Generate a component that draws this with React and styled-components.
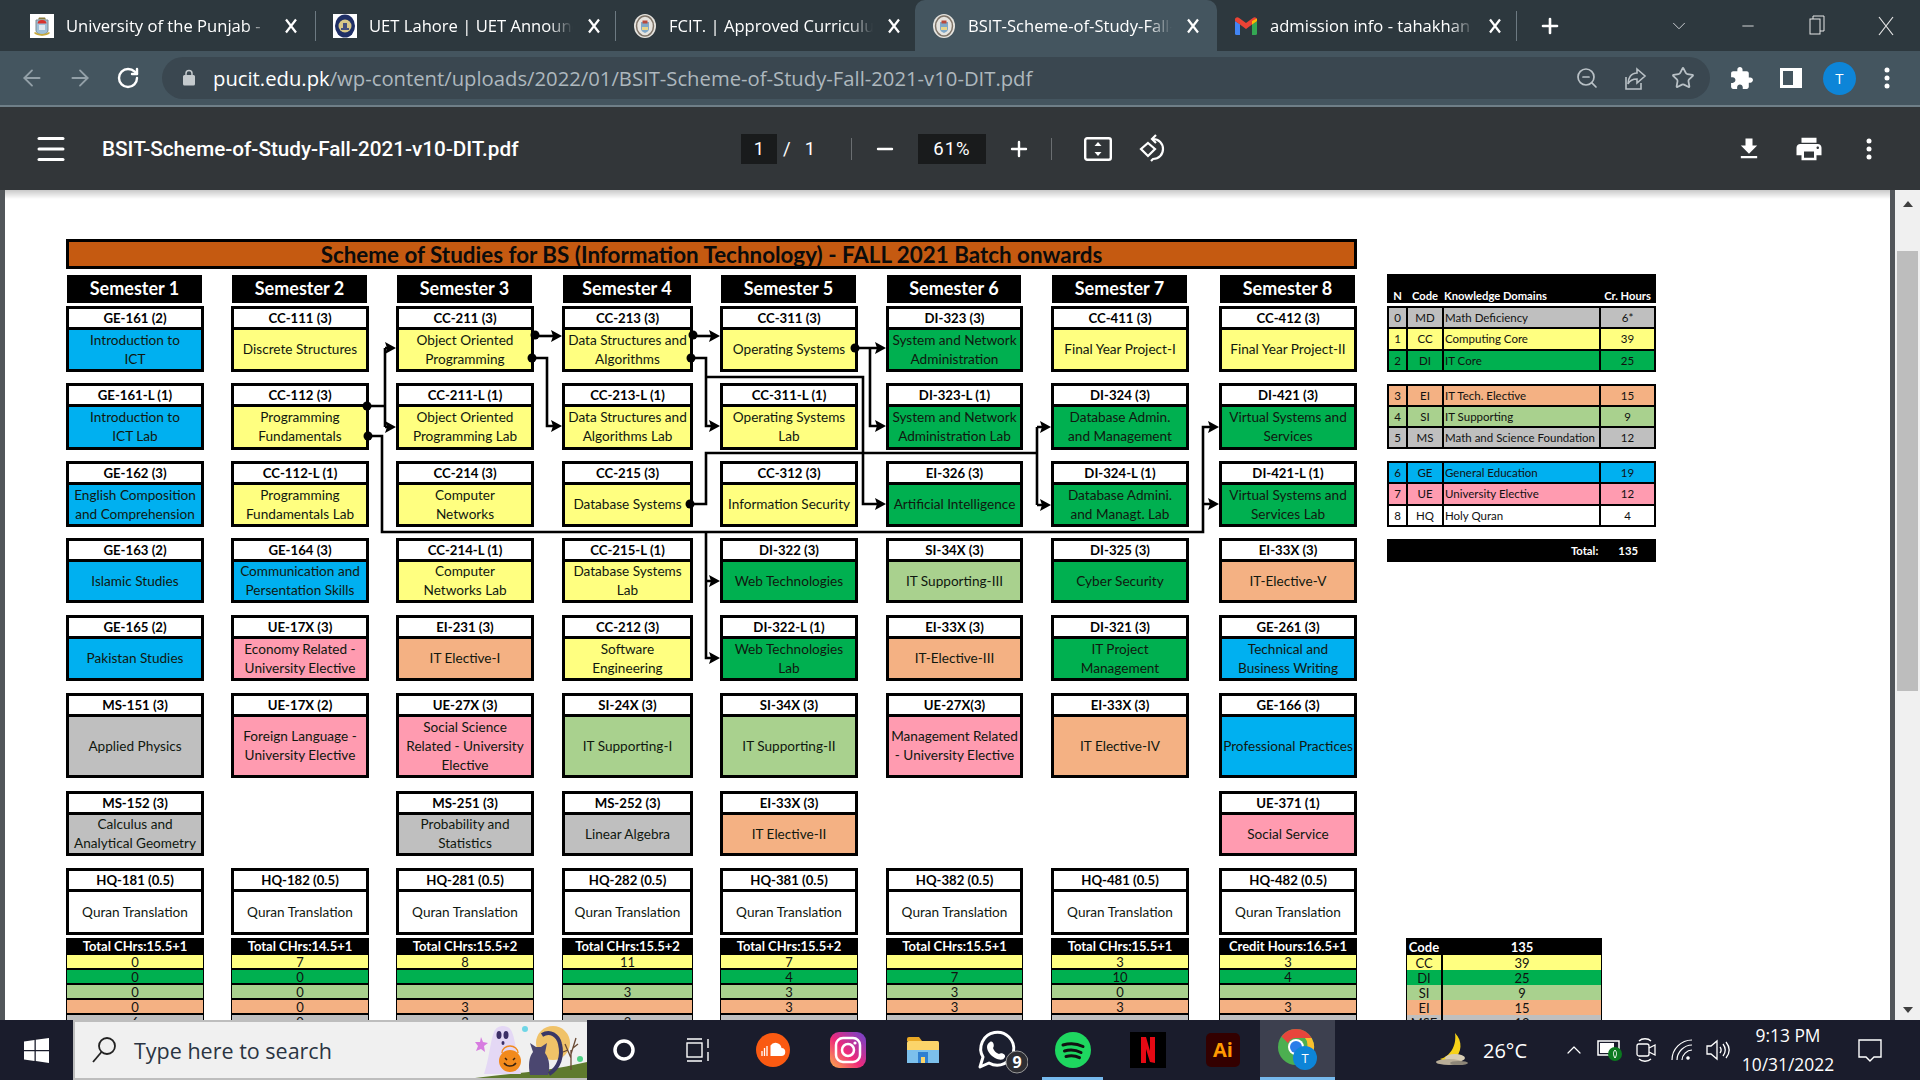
import styled, { createGlobalStyle, css } from "styled-components";
import { ArrowLeft, ArrowRight, RotateCw, ZoomOut, Star, Plus, Minus, ChevronDown, ChevronUp, Menu } from "lucide-react";

const GlobalStyle = createGlobalStyle`
  html, body { margin: 0; padding: 0; height: 100%; overflow: hidden; background: #323639; }
  * { box-sizing: border-box; }
`;

const uiFont = `"Open Sans", "Noto Sans", sans-serif`;
const docFont = `Lato, "Open Sans", sans-serif`;

const tones = {
  white: "#ffffff",
  blue: "#00b0f0",
  yellow: "#ffff80",
  green: "#00b050",
  olive: "#a9d18e",
  orange: "#f4b183",
  pink: "#ff9bb0",
  gray: "#bfbfbf",
};

const semesterColumns = css`
  display: grid;
  grid-template-columns: 138px 27px 138px 27px 138px 28px 131px 27px 138px 28px 137px 28px 138px 30px 138px;
`;

const Screen = styled.div`
  width: 1920px;
  height: 1080px;
  display: flex;
  flex-direction: column;
  overflow: hidden;
  font-family: ${uiFont};
`;

/* browser chrome */
const TabStrip = styled.div`
  height: 51px;
  flex: none;
  display: flex;
  align-items: center;
  padding-left: 13px;
  background: #2d383e;
  color: #fff;
`;
const Tab = styled.div`
  width: ${(p) => p.$width}px;
  height: 51px;
  flex: none;
  display: flex;
  align-items: center;
  padding-left: 17px;
  border-radius: 10px 10px 0 0;
  background: ${(p) => (p.$active ? "#44555f" : "transparent")};
`;
const TabTitle = styled.div`
  width: 204px;
  margin-left: 12px;
  font-size: 16.6px;
  white-space: nowrap;
  overflow: hidden;
  mask-image: linear-gradient(to right, #000 88%, transparent 100%);
`;
const TabClose = styled.svg`
  margin-left: 14px;
  flex: none;
`;
const TabSeparator = styled.div`
  width: 1px;
  height: 30px;
  flex: none;
  background: #6d7a82;
`;
const NewTab = styled.div`
  width: 66px;
  display: flex;
  justify-content: center;
`;
const WindowControls = styled.div`
  margin-left: auto;
  display: flex;
  align-items: center;
`;
const WindowButton = styled.div`
  width: 69px;
  display: flex;
  justify-content: center;
`;

const Toolbar = styled.div`
  height: 56px;
  flex: none;
  display: flex;
  align-items: flex-start;
  padding: 6px 0 0 8px;
  background: #44555f;
  border-bottom: 2px solid #6f7f88;
`;
const NavButton = styled.div`
  width: ${(p) => p.$width || 48}px;
  height: 42px;
  flex: none;
  display: flex;
  align-items: center;
  justify-content: center;
  color: ${(p) => p.$color || "#fff"};
`;
const Omnibox = styled.div`
  width: 1548px;
  height: 42px;
  margin: 0 7px 0 10px;
  flex: none;
  display: flex;
  align-items: center;
  padding-left: 18px;
  border-radius: 21px;
  background: #3a4750;
`;
const Url = styled.div`
  margin-left: 15px;
  font-size: 20.25px;
  color: #aeb8be;
  white-space: nowrap;
  & b {
    font-weight: 400;
    color: #fff;
  }
`;
const OmniActions = styled.div`
  margin-left: auto;
  display: flex;
  padding-right: 3px;
  color: #b9c1c6;
`;
const Avatar = styled.div`
  width: 33px;
  height: 33px;
  border-radius: 50%;
  display: flex;
  align-items: center;
  justify-content: center;
  background: #0d85d8;
  color: #fff;
  font-size: 15px;
`;

/* pdf viewer toolbar */
const PdfBar = styled.div`
  height: 83px;
  flex: none;
  display: flex;
  align-items: center;
  padding: 0 21px 0 33px;
  background: #323639;
  color: #fff;
  font-family: Roboto, sans-serif;
`;
const FileName = styled.div`
  width: 639px;
  margin-left: 33px;
  flex: none;
  font-size: 20.7px;
  font-weight: 500;
`;
const NumberBox = styled.div`
  width: ${(p) => p.$width}px;
  height: 30px;
  flex: none;
  display: flex;
  align-items: center;
  justify-content: center;
  background: #191b1c;
  font-size: 18.5px;
  letter-spacing: ${(p) => (p.$spaced ? "1px" : 0)};
`;
const PageTotal = styled.div`
  width: 74px;
  padding-left: 6px;
  flex: none;
  font-size: 18.5px;
  display: flex;
  gap: 14px;
`;
const BarDivider = styled.div`
  width: 1px;
  height: 22px;
  flex: none;
  background: #6a6e71;
`;
const BarButton = styled.div`
  width: ${(p) => p.$width}px;
  flex: none;
  display: flex;
  align-items: center;
  justify-content: center;
  & svg {
    flex: none;
  }
`;
const BarRight = styled.div`
  margin-left: auto;
  display: flex;
  align-items: center;
`;

/* viewer */
const Viewer = styled.div`
  flex: 1;
  min-height: 0;
  display: flex;
  background: #52565a;
  padding: 0 0 0 5px;
`;
const Page = styled.div`
  position: relative;
  width: 1885px;
  flex: none;
  display: flex;
  align-items: flex-start;
  padding: 49px 0 0 61px;
  background: #fff;
  overflow: hidden;
  &::before {
    content: "";
    position: absolute;
    inset: 0 0 auto 0;
    height: 9px;
    background: linear-gradient(#c9c9c9, #fff);
  }
`;
const Gutter = styled.div`
  width: 5px;
  flex: none;
`;
const Scrollbar = styled.div`
  flex: 1;
  display: flex;
  flex-direction: column;
  align-items: center;
  padding: 11px 2px 0;
  background: #f0f0f0;
`;
const ScrollThumb = styled.div`
  width: 100%;
  height: 440px;
  margin-top: 44px;
  background: #bdbdbd;
`;
const ScrollArrow = styled.div`
  width: 0;
  height: 0;
  border-left: 5px solid transparent;
  border-right: 5px solid transparent;
  ${(p) => (p.$down ? "border-top: 6px solid #404040;" : "border-bottom: 6px solid #404040;")}
  ${(p) => p.$down && "margin-top: 316px;"}
`;

const Sheet = styled.div`
  width: 1291px;
  flex: none;
  font-family: ${docFont};
  color: #111;
`;
const SheetTitle = styled.div`
  height: 30px;
  margin-bottom: 6px;
  display: flex;
  align-items: center;
  justify-content: center;
  border: 3px solid #000;
  background: #c55a11;
  font-size: 22.4px;
  font-weight: 700;
  color: #0b0b0b;
`;
const SemesterRow = styled.div`
  ${semesterColumns}
  margin-bottom: 3px;
`;
const SemesterHead = styled.div`
  grid-column: ${(p) => p.$col * 2 + 1};
  height: 28px;
  margin: 0 2px 0 1px;
  padding-bottom: 3px;
  display: flex;
  align-items: center;
  justify-content: center;
  background: #000;
  color: #fff;
  font-size: 18px;
  font-weight: 700;
`;
const CourseRow = styled.div`
  ${semesterColumns}
  height: ${(p) => p.$h}px;
  margin-bottom: ${(p) => p.$gap}px;
`;
const Card = styled.div`
  grid-column: ${(p) => p.$col * 2 + 1};
  display: flex;
  flex-direction: column;
  border: 3px solid #000;
  background: ${(p) => tones[p.$tone]};
`;
const CardCode = styled.div`
  height: 21px;
  flex: none;
  display: flex;
  align-items: center;
  justify-content: center;
  background: #fff;
  border-bottom: 3px solid #000;
  font-size: 13.2px;
  font-weight: 700;
  color: #000;
`;
const CardName = styled.div`
  flex: 1;
  display: flex;
  align-items: center;
  justify-content: center;
  text-align: center;
  font-size: 13.6px;
  line-height: 19px;
  white-space: pre-line;
  color: #10180f;
`;
const TotalColumn = styled.div`
  grid-column: ${(p) => p.$col * 2 + 1};
  display: flex;
  flex-direction: column;
  gap: 2px;
  padding: 0 1px 0 1px;
  background: #000;
`;
const TotalHead = styled.div`
  height: 15px;
  padding-top: 1px;
  display: flex;
  align-items: center;
  justify-content: center;
  background: #000;
  color: #fff;
  font-size: 13px;
  font-weight: 700;
`;
const TotalCell = styled.div`
  height: 13px;
  flex: none;
  display: flex;
  align-items: center;
  justify-content: center;
  background: ${(p) => tones[p.$tone]};
  font-size: 13px;
  color: #111;
`;

/* legend on the right */
const Side = styled.div`
  width: 269px;
  margin: 35px 0 0 30px;
  flex: none;
  font-family: ${docFont};
  color: #111;
`;
const legendGrid = css`
  display: grid;
  grid-template-columns: 17px 34px 1fr 53px;
  column-gap: 2px;
`;
const LegendHead = styled.div`
  ${legendGrid}
  height: 29px;
  margin-bottom: 3px;
  padding: 15px 2px 0;
  background: #000;
  color: #fff;
  font-size: 11.2px;
  font-weight: 700;
  text-align: center;
  white-space: nowrap;
`;
const LegendHeadLabel = styled.span`
  text-align: left;
`;
const LegendGroup = styled.div`
  display: flex;
  flex-direction: column;
  gap: 2px;
  height: ${(p) => p.$h}px;
  margin-bottom: 12px;
  padding: 2px;
  background: #000;
`;
const LegendRow = styled.div`
  ${legendGrid}
  flex: 1;
  font-size: 11.5px;
  text-align: center;
  align-items: center;
`;
const LegendCell = styled.div`
  height: 100%;
  display: flex;
  align-items: center;
  justify-content: ${(p) => (p.$left ? "flex-start" : "center")};
  padding-left: ${(p) => (p.$left ? "1px" : 0)};
  background: ${(p) => tones[p.$tone]};
  white-space: nowrap;
`;
const LegendTotal = styled.div`
  height: 23px;
  display: flex;
  align-items: center;
  justify-content: flex-end;
  gap: 20px;
  padding-right: 18px;
  background: #000;
  color: #fff;
  font-size: 11.3px;
  font-weight: 700;
`;
const Summary = styled.div`
  width: 196px;
  margin: 376px 0 0 19px;
  display: flex;
  flex-direction: column;
  gap: 2px;
  background: #000;
`;
const SummaryRow = styled.div`
  display: grid;
  grid-template-columns: 34px 1fr;
  column-gap: 2px;
  height: ${(p) => (p.$head ? 15 : 13)}px;
  padding: ${(p) => (p.$head ? "1px 1px 0" : "0 1px")};
  font-size: 13px;
  font-weight: ${(p) => (p.$head ? 700 : 400)};
  color: ${(p) => (p.$head ? "#fff" : "#111")};
`;
const SummaryCell = styled.div`
  display: flex;
  align-items: center;
  justify-content: center;
  background: ${(p) => (p.$tone ? tones[p.$tone] : "#000")};
`;
const Connectors = styled.svg`
  position: absolute;
  left: 0;
  top: 0;
  pointer-events: none;
`;

/* windows taskbar */
const Taskbar = styled.div`
  height: 60px;
  flex: none;
  display: flex;
  align-items: stretch;
  background: #1a1c2c;
  color: #fff;
`;
const StartButton = styled.div`
  width: 73px;
  flex: none;
  display: flex;
  align-items: center;
  padding-left: 24px;
`;
const SearchBox = styled.div`
  width: 514px;
  flex: none;
  display: flex;
  align-items: center;
  padding-left: 16px;
  background: #f0f0f0;
  border: solid #bdbdbd;
  border-width: 2px 0 2px 2px;
  color: #2a3442;
  font-size: 21.5px;
  overflow: hidden;
`;
const SearchText = styled.span`
  margin-left: 17px;
`;
const Doodle = styled.svg`
  margin-left: auto;
  flex: none;
`;
const TaskIcon = styled.div`
  position: relative;
  width: ${(p) => p.$width || 75}px;
  flex: none;
  display: flex;
  align-items: center;
  justify-content: center;
  background: ${(p) => (p.$active ? "#3d404f" : "transparent")};
  &::after {
    content: "";
    position: absolute;
    bottom: 0;
    height: 3px;
    width: ${(p) => (p.$active ? "100%" : "61px")};
    background: #76b9ed;
    display: ${(p) => (p.$running ? "block" : "none")};
  }
`;
const Weather = styled.div`
  width: 221px;
  flex: none;
  display: flex;
  align-items: center;
  padding-left: 100px;
  gap: 12px;
  font-size: 20px;
`;
const TrayIcon = styled.div`
  width: 36px;
  flex: none;
  display: flex;
  align-items: center;
  justify-content: center;
`;
const Clock = styled.div`
  width: 104px;
  flex: none;
  display: flex;
  flex-direction: column;
  justify-content: center;
  align-items: center;
  gap: 8px;
  font-size: 17.4px;
  line-height: 21px;
  white-space: nowrap;
`;
const NotifyButton = styled.div`
  width: 60px;
  flex: none;
  display: flex;
  align-items: center;
  justify-content: center;
`;

const semesters = [1, 2, 3, 4, 5, 6, 7, 8];

const courseRows = [
  { h: 66, gap: 11, cells: [
    ["GE-161 (2)", "Introduction to\nICT", "blue"],
    ["CC-111 (3)", "Discrete Structures", "yellow"],
    ["CC-211 (3)", "Object Oriented\nProgramming", "yellow"],
    ["CC-213 (3)", "Data Structures and\nAlgorithms", "yellow"],
    ["CC-311 (3)", "Operating Systems", "yellow"],
    ["DI-323 (3)", "System and Network\nAdministration", "green"],
    ["CC-411 (3)", "Final Year Project-I", "yellow"],
    ["CC-412 (3)", "Final Year Project-II", "yellow"],
  ] },
  { h: 67, gap: 11, cells: [
    ["GE-161-L (1)", "Introduction to\nICT Lab", "blue"],
    ["CC-112 (3)", "Programming\nFundamentals", "yellow"],
    ["CC-211-L (1)", "Object Oriented\nProgramming Lab", "yellow"],
    ["CC-213-L (1)", "Data Structures and\nAlgorithms Lab", "yellow"],
    ["CC-311-L (1)", "Operating Systems\nLab", "yellow"],
    ["DI-323-L (1)", "System and Network\nAdministration Lab", "green"],
    ["DI-324 (3)", "Database  Admin.\nand Management", "green"],
    ["DI-421 (3)", "Virtual Systems and\nServices", "green"],
  ] },
  { h: 66, gap: 11, cells: [
    ["GE-162 (3)", "English Composition\nand Comprehension", "blue"],
    ["CC-112-L (1)", "Programming\nFundamentals Lab", "yellow"],
    ["CC-214 (3)", "Computer\nNetworks", "yellow"],
    ["CC-215 (3)", "Database Systems", "yellow"],
    ["CC-312 (3)", "Information Security", "yellow"],
    ["EI-326 (3)", "Artificial Intelligence", "green"],
    ["DI-324-L (1)", "Database  Admini.\nand Managt. Lab", "green"],
    ["DI-421-L (1)", "Virtual Systems and\nServices Lab", "green"],
  ] },
  { h: 65, gap: 12, cells: [
    ["GE-163 (2)", "Islamic Studies", "blue"],
    ["GE-164 (3)", "Communication and\nPersentation Skills", "blue"],
    ["CC-214-L (1)", "Computer\nNetworks Lab", "yellow"],
    ["CC-215-L (1)", "Database Systems\nLab", "yellow"],
    ["DI-322 (3)", "Web Technologies", "green"],
    ["SI-34X (3)", "IT Supporting-III", "olive"],
    ["DI-325 (3)", "Cyber Security", "green"],
    ["EI-33X (3)", "IT-Elective-V", "orange"],
  ] },
  { h: 66, gap: 12, cells: [
    ["GE-165 (2)", "Pakistan Studies", "blue"],
    ["UE-17X (3)", "Economy Related -\nUniversity Elective", "pink"],
    ["EI-231 (3)", "IT Elective-I", "orange"],
    ["CC-212 (3)", "Software\nEngineering", "yellow"],
    ["DI-322-L (1)", "Web Technologies\nLab", "green"],
    ["EI-33X (3)", "IT-Elective-III", "orange"],
    ["DI-321 (3)", "IT Project\nManagement", "green"],
    ["GE-261 (3)", "Technical and\nBusiness Writing", "blue"],
  ] },
  { h: 85, gap: 13, cells: [
    ["MS-151 (3)", "Applied Physics", "gray"],
    ["UE-17X (2)", "Foreign Language -\nUniversity Elective", "pink"],
    ["UE-27X (3)", "Social Science\nRelated - University\nElective", "pink"],
    ["SI-24X (3)", "IT Supporting-I", "olive"],
    ["SI-34X (3)", "IT Supporting-II", "olive"],
    ["UE-27X(3)", "Management Related\n- University Elective", "pink"],
    ["EI-33X (3)", "IT Elective-IV", "orange"],
    ["GE-166 (3)", "Professional Practices", "blue"],
  ] },
  { h: 64, gap: 13, cells: [
    ["MS-152 (3)", "Calculus and\nAnalytical Geometry", "gray"],
    null,
    ["MS-251 (3)", "Probability and\nStatistics", "gray"],
    ["MS-252 (3)", "Linear Algebra", "gray"],
    ["EI-33X (3)", "IT Elective-II", "orange"],
    null,
    null,
    ["UE-371 (1)", "Social Service", "pink"],
  ] },
  { h: 67, gap: 3, cells: [
    ["HQ-181 (0.5)", "Quran Translation", "white"],
    ["HQ-182 (0.5)", "Quran Translation", "white"],
    ["HQ-281 (0.5)", "Quran Translation", "white"],
    ["HQ-282 (0.5)", "Quran Translation", "white"],
    ["HQ-381 (0.5)", "Quran Translation", "white"],
    ["HQ-382 (0.5)", "Quran Translation", "white"],
    ["HQ-481 (0.5)", "Quran Translation", "white"],
    ["HQ-482 (0.5)", "Quran Translation", "white"],
  ] },
];

const totalTones = ["yellow", "green", "olive", "orange", "gray"];
const totals = [
  ["Total CHrs:15.5+1", ["0", "0", "0", "0", "6"]],
  ["Total CHrs:14.5+1", ["7", "0", "0", "0", "0"]],
  ["Total CHrs:15.5+2", ["8", "", "", "3", "3"]],
  ["Total CHrs:15.5+2", ["11", "", "3", "", "3"]],
  ["Total CHrs:15.5+2", ["7", "4", "3", "3", ""]],
  ["Total CHrs:15.5+1", ["", "7", "3", "3", ""]],
  ["Total CHrs:15.5+1", ["3", "10", "0", "3", ""]],
  ["Credit Hours:16.5+1", ["3", "4", "", "3", ""]],
];

const legendGroups = [
  { h: 66, rows: [["0", "MD", "Math Deficiency", "6*", "gray"], ["1", "CC", "Computing Core", "39", "yellow"], ["2", "DI", "IT Core", "25", "green"]] },
  { h: 65, rows: [["3", "EI", "IT Tech. Elective", "15", "orange"], ["4", "SI", "IT Supporting", "9", "olive"], ["5", "MS", "Math and Science Foundation", "12", "gray"]] },
  { h: 66, rows: [["6", "GE", "General Education", "19", "blue"], ["7", "UE", "University Elective", "12", "pink"], ["8", "HQ", "Holy Quran", "4", "white"]] },
];

const summaryRows = [
  ["CC", "39", "yellow"],
  ["DI", "25", "green"],
  ["SI", "9", "olive"],
  ["EI", "15", "orange"],
  ["MSF", "12", "gray"],
];

// connector lines of the prerequisite diagram, in screen coordinates
const links = [
  "M367 406H385M385 348V427M385 348H390M385 427H390",
  "M368 436H382V532H1203V427H1212M1203 504H1212",
  "M535 336H555",
  "M532 358H547V426H555",
  "M693 336H713",
  "M691 358H706V426H713",
  "M706 377H863V504H879",
  "M690 504H706V453H1037M1037 427V505M1037 427H1044M1037 505H1044",
  "M855 348H879M870 348V426H879",
  "M706 532V658H713M706 581H713",
];
const arrowTips = [
  [396, 348], [396, 427], [1219, 427], [1219, 504], [562, 336], [562, 426], [720, 336], [720, 426],
  [886, 504], [1051, 427], [1051, 505], [886, 348], [886, 426], [720, 581], [720, 658],
];
const dots = [
  [367, 406], [368, 436], [535, 335], [532, 358], [693, 335], [691, 358], [690, 504], [855, 348],
];

function CloseGlyph() {
  return (
    <TabClose width="14" height="16" viewBox="0 0 14 16">
      <path d="M2 1.5L12 14.5M12 1.5L2 14.5" stroke="#fff" strokeWidth="2.2" />
    </TabClose>
  );
}

function PunjabCrest() {
  return (
    <svg width="24" height="24" viewBox="0 0 24 24">
      <rect width="24" height="24" fill="#fff" />
      <path d="M9 3.500h6l1 2H8z" fill="#8a7a3a" />
      <path d="M6 6h12v10c0 3-3 4.500-6 5-3-.5-6-2-6-5z" fill="#9fc0d8" stroke="#7a8a90" />
      <path d="M7.500 9.500a4.500 3.500 0 0 1 9 0z" fill="#d8322c" />
      <rect x="9" y="11" width="6" height="5" fill="#dfe8ee" />
      <path d="M4 19c3 3.500 13 3.500 16 0l-1-1c-3 2.500-11 2.500-14 0z" fill="#c8a93a" />
    </svg>
  );
}

function UetCrest() {
  return (
    <svg width="24" height="24" viewBox="0 0 24 24">
      <rect width="24" height="24" fill="#fff" />
      <ellipse cx="12" cy="12" rx="10" ry="11.500" fill="#1f2f66" />
      <circle cx="12" cy="12" r="6.500" fill="#d8c888" />
      <path d="M8 14h8v2H8zM10 9h4v5h-4z" fill="#44507e" />
    </svg>
  );
}

function FcitCrest() {
  return (
    <svg width="24" height="24" viewBox="0 0 24 24">
      <ellipse cx="12" cy="12" rx="11" ry="12" fill="#e6e4df" />
      <ellipse cx="12" cy="12" rx="8.500" ry="10" fill="none" stroke="#7f7468" strokeWidth="1.500" />
      <path d="M8 8h8v7c0 2-2 3-4 4-2-1-4-2-4-4z" fill="#7fa8c8" />
      <path d="M9.500 6.500h5v3h-5z" fill="#b84a3c" />
      <path d="M9 13h6v3H9z" fill="#e7d58a" />
    </svg>
  );
}

function GmailMark() {
  return (
    <svg width="24" height="18" viewBox="-1 0 24 18">
      <path d="M0 4v12.500A1.500 1.500 0 0 0 1.500 18H5V7z" fill="#4285f4" />
      <path d="M17 7v11h3.500a1.500 1.500 0 0 0 1.500-1.500V4z" fill="#34a853" />
      <path d="M0 4l5 3.500L11 12l6-4.500L22 4V2.500C22 .500 19.800-.5 18.200.700L11 6 3.800.700C2.200-.5 0 .500 0 2.500z" fill="#ea4335" />
      <path d="M17 7.500L22 4V1.500L17 4z" fill="#fbbc04" />
    </svg>
  );
}

function MaterialIcon({ d, size = 24, color = "currentColor" }) {
  return (
    <svg width={size} height={size} viewBox="0 0 24 24" fill={color}>
      <path d={d} />
    </svg>
  );
}

const icons = {
  lock: "M18 8h-1V6a5 5 0 0 0-10 0v2H6a2 2 0 0 0-2 2v10a2 2 0 0 0 2 2h12a2 2 0 0 0 2-2V10a2 2 0 0 0-2-2zM9 8V6a3 3 0 0 1 6 0v2H9z",
  puzzle: "M20.500 11H19V7c0-1.100-.9-2-2-2h-4V3.500C13 2.120 11.880 1 10.500 1S8 2.120 8 3.500V5H4c-1.100 0-1.990.9-1.990 2v3.800H3.500c1.490 0 2.700 1.210 2.700 2.700s-1.210 2.700-2.700 2.700H2V20c0 1.100.9 2 2 2h3.800v-1.500c0-1.490 1.210-2.700 2.700-2.700 1.490 0 2.700 1.210 2.700 2.700V22H17c1.100 0 2-.9 2-2v-4h1.500c1.380 0 2.500-1.120 2.500-2.500S21.880 11 20.500 11z",
  print: "M19 8H5c-1.660 0-3 1.340-3 3v6h4v4h12v-4h4v-6c0-1.660-1.340-3-3-3zm-3 11H8v-5h8v5zm3-7c-.55 0-1-.45-1-1s.45-1 1-1 1 .45 1 1-.45 1-1 1zm-1-9H6v4h12V3z",
  download: "M19 9h-4V3H9v6H5l7 7 7-7zM5 18v2h14v-2H5z",
};

function DotsIcon({ color = "#fff" }) {
  return (
    <svg width="6" height="22" viewBox="0 0 6 22" fill={color}>
      <circle cx="3" cy="3" r="2.500" />
      <circle cx="3" cy="11" r="2.500" />
      <circle cx="3" cy="19" r="2.500" />
    </svg>
  );
}

function WindowsLogo() {
  return (
    <svg width="25" height="25" viewBox="0 0 25 25" fill="#fff">
      <path d="M0 3.500L10.500 2v10H0zM11.800 1.800L25 0v12H11.800zM0 13.200h10.500V23L0 21.600zM11.800 13.200H25V25l-13.200-1.900z" />
    </svg>
  );
}

function HalloweenDoodle() {
  return (
    <Doodle width="112" height="56" viewBox="0 0 112 56">
      <path d="M0 56C30 52 70 50 112 40V56z" fill="#5f7a2e" />
      <path d="M6 15l2 5 5 1-4 3 1 6-4-3-5 2 2-5-3-4 5 0z" fill="#d77ce0" />
      <circle cx="50" cy="7" r="3" fill="#6fd6e6" />
      <circle cx="105" cy="37" r="3" fill="#4cd184" />
      <circle cx="78" cy="21" r="17" fill="#f0c268" />
      <path d="M9 52C14 38 15 20 19 10c3-8 15-8 18 0 4 10 5 28 9 42z" fill="#e4d8f5" />
      <ellipse cx="24" cy="13" rx="2.500" ry="4" fill="#3c2f66" />
      <ellipse cx="31" cy="13" rx="2.500" ry="4" fill="#3c2f66" />
      <ellipse cx="28" cy="21" rx="1.500" ry="2" fill="#3c2f66" />
      <circle cx="35" cy="39" r="11" fill="#f28a1c" />
      <path d="M27 31a8 7 0 0 1 16 0" fill="none" stroke="#f28a1c" strokeWidth="1.500" />
      <path d="M30 36l2 2M40 36l-2 2M29 41c3 4 9 4 12 0" stroke="#3a2310" strokeWidth="1.500" fill="none" />
      <path d="M55 53c-2-10-1-18 3-23l-3-9 6 4h5l6-4-2 10c5 6 5 16 3 22z" fill="#4b4770" />
      <path d="M74 52c10-6 14-18 11-30-2-9-10-14-18-9" fill="none" stroke="#3a3766" strokeWidth="4" />
      <path d="M96 48V28M96 36l-6-14M96 32l5-16M93 28l-5 2M98 26l5-4" stroke="#6a4a35" strokeWidth="1.300" fill="none" />
    </Doodle>
  );
}

function SoundCloudMark() {
  return (
    <svg width="34" height="34" viewBox="0 0 34 34">
      <circle cx="17" cy="17" r="17" fill="#fa5a12" />
      <path d="M12 23h13a4 4 0 0 0 .5-8 6 6 0 0 0-11-2.500V23z" fill="#fff" />
      <path d="M6 18v5M8.500 15v8M11 13v10" stroke="#fff" strokeWidth="1.300" />
    </svg>
  );
}

function InstagramMark() {
  return (
    <svg width="36" height="36" viewBox="0 0 36 36">
      <defs>
        <linearGradient id="ig" x1="0" y1="1" x2="1" y2="0">
          <stop offset="0" stopColor="#fdb04a" />
          <stop offset="0.45" stopColor="#ee2a7b" />
          <stop offset="1" stopColor="#6a45d0" />
        </linearGradient>
      </defs>
      <rect width="36" height="36" rx="9" fill="url(#ig)" />
      <rect x="6" y="6" width="24" height="24" rx="7" fill="none" stroke="#fff" strokeWidth="2.500" />
      <circle cx="18" cy="18" r="6" fill="none" stroke="#fff" strokeWidth="2.500" />
      <circle cx="25" cy="11" r="1.600" fill="#fff" />
    </svg>
  );
}

function ExplorerMark() {
  return (
    <svg width="32" height="26" viewBox="0 0 32 26">
      <path d="M0 2a2 2 0 0 1 2-2h10l3 4H0z" fill="#e9a825" />
      <rect y="4" width="32" height="22" rx="1.500" fill="#fbd46a" />
      <path d="M0 13h32v13H0z" fill="#7cc0ec" />
      <rect x="11" y="15" width="10" height="11" fill="#2f7fd0" />
      <rect x="14" y="20" width="4" height="6" fill="#fbd46a" />
    </svg>
  );
}

function WhatsAppMark() {
  return (
    <svg width="60" height="52" viewBox="0 0 60 52">
      <path d="M12 43l3-10a16.500 16.500 0 1 1 6 6z" fill="#1b1f2f" stroke="#fff" strokeWidth="3" strokeLinejoin="round" />
      <g transform="translate(9 6)">
        <path d="M13 12c3-2 5 4 3 6 1 3 3 5 6 6 2-2 7 0 6 3-2 4-6 3-10 1-4-2-8-7-8-11 0-2 1-4 3-5z" fill="#fff" />
      </g>
      <circle cx="49" cy="38" r="11" fill="#2e2e33" stroke="#9a9a9a" strokeWidth="1" />
      <text x="49" y="44" fill="#fff" fontSize="16" fontFamily="Open Sans" fontWeight="700" textAnchor="middle">9</text>
    </svg>
  );
}

function SpotifyMark() {
  return (
    <svg width="36" height="36" viewBox="0 0 36 36">
      <circle cx="18" cy="18" r="18" fill="#1ed760" />
      <path d="M8 13c7-2 14-1.500 20 1.500M9.500 19c6-1.600 11.500-1 16.500 1.500M11 24.500c5-1.200 9.500-.8 13.500 1.200" fill="none" stroke="#111" strokeWidth="3" strokeLinecap="round" />
    </svg>
  );
}

function NetflixMark() {
  return (
    <svg width="36" height="36" viewBox="0 0 36 36">
      <rect width="36" height="36" fill="#000" />
      <path d="M11 5h5l4 14V5h5v26l-5-1-4-13v14h-5z" fill="#e50914" />
    </svg>
  );
}

function IllustratorMark() {
  return (
    <svg width="34" height="34" viewBox="0 0 34 34">
      <rect width="34" height="34" rx="5" fill="#330000" />
      <text x="17" y="24" fill="#ff9a00" fontSize="20" fontWeight="700" fontFamily="Open Sans" textAnchor="middle">Ai</text>
    </svg>
  );
}

function ChromeMark() {
  return (
    <svg width="40" height="42" viewBox="0 0 40 42">
      <circle cx="18" cy="18" r="18" fill="#4caf50" />
      <path d="M18 0a18 18 0 0 1 15.600 9H18a9 9 0 0 0-8 5L3.500 7.500A18 18 0 0 1 18 0z" fill="#e8453c" />
      <path d="M33.600 9A18 18 0 0 1 18 36l7.800-13.500A9 9 0 0 0 27 9z" fill="#fbc02d" />
      <circle cx="18" cy="18" r="8" fill="#fff" />
      <circle cx="18" cy="18" r="6" fill="#2b7de9" />
      <circle cx="27" cy="29" r="12" fill="#0d85d8" />
      <text x="27" y="34" fill="#fff" fontSize="13" fontFamily="Open Sans" textAnchor="middle">T</text>
    </svg>
  );
}

function MoonCloud() {
  return (
    <svg width="36" height="36" viewBox="0 0 36 36">
      <path d="M20 1c8 8 7 20-1 26-4 2-10 2-14 0 9-2 17-12 15-26z" fill="#f7d218" />
      <ellipse cx="20" cy="26" rx="10" ry="4" fill="#d8cdb4" />
      <ellipse cx="14" cy="30" rx="13" ry="3" fill="#b8ad98" />
      <ellipse cx="24" cy="31" rx="9" ry="2" fill="#8d8678" />
    </svg>
  );
}

export default function App() {
  return (
    <Screen>
      <GlobalStyle />
      <TabStrip>
        <Tab $width={302}>
          <PunjabCrest />
          <TabTitle>University of the Punjab -</TabTitle>
          <CloseGlyph />
        </Tab>
        <TabSeparator />
        <Tab $width={299}>
          <UetCrest />
          <TabTitle>UET Lahore | UET Announcements</TabTitle>
          <CloseGlyph />
        </Tab>
        <TabSeparator />
        <Tab $width={299}>
          <FcitCrest />
          <TabTitle>FCIT. | Approved Curriculum</TabTitle>
          <CloseGlyph />
        </Tab>
        <Tab $width={302} $active>
          <FcitCrest />
          <TabTitle>BSIT-Scheme-of-Study-Fall-2021-v10-DIT.pdf</TabTitle>
          <CloseGlyph />
        </Tab>
        <Tab $width={299}>
          <GmailMark />
          <TabTitle>admission info - tahakhan</TabTitle>
          <CloseGlyph />
        </Tab>
        <TabSeparator />
        <NewTab>
          <Plus size={24} color="#fff" strokeWidth={2.6} />
        </NewTab>
        <WindowControls>
          <WindowButton>
            <ChevronDown size={22} color="#d6dadd" strokeWidth={1} />
          </WindowButton>
          <WindowButton>
            <Minus size={18} color="#e6e6e6" strokeWidth={1.2} />
          </WindowButton>
          <WindowButton>
            <svg width="16" height="22" viewBox="0 0 16 22" fill="none" stroke="#e6e6e6">
              <rect x="1" y="4" width="10" height="15" />
              <path d="M4 4V1h11v15h-4" />
            </svg>
          </WindowButton>
          <WindowButton>
            <svg width="16" height="22" viewBox="0 0 16 22" stroke="#e6e6e6" strokeWidth="1.200">
              <path d="M1 2l14 18M15 2L1 20" />
            </svg>
          </WindowButton>
        </WindowControls>
      </TabStrip>

      <Toolbar>
        <NavButton $color="#93a0a8">
          <ArrowLeft size={26} strokeWidth={1.7} />
        </NavButton>
        <NavButton $color="#93a0a8">
          <ArrowRight size={26} strokeWidth={1.7} />
        </NavButton>
        <NavButton>
          <RotateCw size={24} strokeWidth={2.4} />
        </NavButton>
        <Omnibox>
          <MaterialIcon d={icons.lock} size={18} color="#c4cacd" />
          <Url>
            <b>pucit.edu.pk</b>/wp-content/uploads/2022/01/BSIT-Scheme-of-Study-Fall-2021-v10-DIT.pdf
          </Url>
          <OmniActions>
            <NavButton>
              <ZoomOut size={24} color="#b9c1c6" strokeWidth={1.7} />
            </NavButton>
            <NavButton>
              <svg width="24" height="26" viewBox="0 0 24 26" fill="none" stroke="#b9c1c6" strokeWidth="1.600">
                <path d="M3 12v12h15v-6" />
                <path d="M14 4l8 7-8 7v-4c-4 0-7 1-9 5 0-6 3-11 9-11z" />
              </svg>
            </NavButton>
            <NavButton>
              <Star size={24} color="#b9c1c6" strokeWidth={1.8} />
            </NavButton>
          </OmniActions>
        </Omnibox>
        <NavButton $width={49}>
          <MaterialIcon d={icons.puzzle} size={25} />
        </NavButton>
        <NavButton $width={49}>
          <svg width="22" height="20" viewBox="0 0 22 20">
            <path d="M0 0h22v20H0zM3 3v14h10V3z" fill="#fff" fillRule="evenodd" />
            <rect x="13" y="3" width="6" height="14" fill="#fff" />
          </svg>
        </NavButton>
        <NavButton $width={49}>
          <Avatar>T</Avatar>
        </NavButton>
        <NavButton $width={46}>
          <DotsIcon />
        </NavButton>
      </Toolbar>

      <PdfBar>
        <Menu size={36} color="#fff" strokeWidth={2} />
        <FileName>BSIT-Scheme-of-Study-Fall-2021-v10-DIT.pdf</FileName>
        <NumberBox $width={36}>1</NumberBox>
        <PageTotal>
          <span>/</span>
          <span>1</span>
        </PageTotal>
        <BarDivider />
        <BarButton $width={66}>
          <Minus size={24} color="#fff" strokeWidth={2.4} />
        </BarButton>
        <NumberBox $width={68} $spaced>61%</NumberBox>
        <BarButton $width={65}>
          <Plus size={24} color="#fff" strokeWidth={2.4} />
        </BarButton>
        <BarDivider />
        <BarButton $width={91}>
          <svg width="28" height="24" viewBox="0 0 28 24">
            <rect x="1.200" y="1.200" width="25.600" height="21.600" rx="2" fill="none" stroke="#fff" strokeWidth="2.400" />
            <path d="M14 5l3.500 4h-7zM14 19l-3.500-4h7z" fill="#fff" />
          </svg>
        </BarButton>
        <BarButton $width={17}>
          <svg width="28" height="30" viewBox="0 0 28 30" fill="none" stroke="#fff" strokeWidth="2.200">
            <path d="M10 9l7 6-7 7-7-7z" />
            <path d="M15 5c6 0 10 4.500 10 10s-4 10-10 10l-2 2" />
            <path d="M18 1l-4 4 4 4" />
          </svg>
        </BarButton>
        <BarRight>
          <BarButton $width={60}>
            <MaterialIcon d={icons.download} size={28} />
          </BarButton>
          <BarButton $width={60}>
            <MaterialIcon d={icons.print} size={30} />
          </BarButton>
          <BarButton $width={60}>
            <DotsIcon />
          </BarButton>
        </BarRight>
      </PdfBar>

      <Viewer>
        <Page>
          <Sheet>
            <SheetTitle>Scheme of Studies for BS (Information Technology) - FALL 2021 Batch onwards</SheetTitle>
            <SemesterRow>
              {semesters.map((n, i) => (
                <SemesterHead key={n} $col={i}>Semester {n}</SemesterHead>
              ))}
            </SemesterRow>
            {courseRows.map((row, r) => (
              <CourseRow key={r} $h={row.h} $gap={row.gap}>
                {row.cells.map((cell, i) =>
                  cell ? (
                    <Card key={i} $col={i} $tone={cell[2]}>
                      <CardCode>{cell[0]}</CardCode>
                      <CardName>{cell[1]}</CardName>
                    </Card>
                  ) : null
                )}
              </CourseRow>
            ))}
            <SemesterRow>
              {totals.map(([label, values], i) => (
                <TotalColumn key={i} $col={i}>
                  <TotalHead>{label}</TotalHead>
                  {values.map((v, j) => (
                    <TotalCell key={j} $tone={totalTones[j]}>{v}</TotalCell>
                  ))}
                </TotalColumn>
              ))}
            </SemesterRow>
          </Sheet>
          <Side>
            <LegendHead>
              <span>N</span>
              <span>Code</span>
              <LegendHeadLabel>Knowledge Domains</LegendHeadLabel>
              <span>Cr. Hours</span>
            </LegendHead>
            {legendGroups.map((group, g) => (
              <LegendGroup key={g} $h={group.h}>
                {group.rows.map(([n, code, name, hours, tone]) => (
                  <LegendRow key={n}>
                    <LegendCell $tone={tone}>{n}</LegendCell>
                    <LegendCell $tone={tone}>{code}</LegendCell>
                    <LegendCell $tone={tone} $left>{name}</LegendCell>
                    <LegendCell $tone={tone}>{hours}</LegendCell>
                  </LegendRow>
                ))}
              </LegendGroup>
            ))}
            <LegendTotal>
              <span>Total:</span>
              <span>135</span>
            </LegendTotal>
            <Summary>
              <SummaryRow $head>
                <SummaryCell>Code</SummaryCell>
                <SummaryCell>135</SummaryCell>
              </SummaryRow>
              {summaryRows.map(([code, value, tone]) => (
                <SummaryRow key={code}>
                  <SummaryCell $tone={tone}>{code}</SummaryCell>
                  <SummaryCell $tone={tone}>{value}</SummaryCell>
                </SummaryRow>
              ))}
            </Summary>
          </Side>
          <Connectors width="1885" height="830" viewBox="5 190 1885 830">
            {links.map((d) => (
              <path key={d} d={d} fill="none" stroke="#000" strokeWidth="2.600" />
            ))}
            {arrowTips.map(([x, y]) => (
              <path key={`${x}-${y}`} d={`M${x} ${y}l-11 -6 2 6 -2 6z`} fill="#000" />
            ))}
            {dots.map(([x, y]) => (
              <circle key={`${x}-${y}`} cx={x} cy={y} r="4.500" fill="#000" />
            ))}
          </Connectors>
        </Page>
        <Gutter />
        <Scrollbar>
          <ScrollArrow />
          <ScrollThumb />
          <ScrollArrow $down />
        </Scrollbar>
      </Viewer>

      <Taskbar>
        <StartButton>
          <WindowsLogo />
        </StartButton>
        <SearchBox>
          <svg width="26" height="30" viewBox="0 0 26 30" fill="none" stroke="#222" strokeWidth="1.800">
            <circle cx="16" cy="11" r="8" />
            <path d="M10.500 17L2 27" />
          </svg>
          <SearchText>Type here to search</SearchText>
          <HalloweenDoodle />
        </SearchBox>
        <TaskIcon $width={73}>
          <svg width="22" height="22" viewBox="0 0 22 22">
            <circle cx="11" cy="11" r="9" fill="none" stroke="#fff" strokeWidth="3.500" />
          </svg>
        </TaskIcon>
        <TaskIcon>
          <svg width="24" height="24" viewBox="0 0 24 24" fill="none" stroke="#fff" strokeWidth="1.400">
            <path d="M1 1h15M1 23h15" />
            <rect x="1" y="5" width="15" height="14" />
            <path d="M22 1v9M22 14v9" />
          </svg>
        </TaskIcon>
        <TaskIcon><SoundCloudMark /></TaskIcon>
        <TaskIcon><InstagramMark /></TaskIcon>
        <TaskIcon><ExplorerMark /></TaskIcon>
        <TaskIcon><WhatsAppMark /></TaskIcon>
        <TaskIcon $running><SpotifyMark /></TaskIcon>
        <TaskIcon><NetflixMark /></TaskIcon>
        <TaskIcon><IllustratorMark /></TaskIcon>
        <TaskIcon $running $active><ChromeMark /></TaskIcon>
        <Weather>
          <MoonCloud />
          <span>26°C</span>
        </Weather>
        <TrayIcon>
          <ChevronUp size={24} color="#fff" strokeWidth={1.2} />
        </TrayIcon>
        <TrayIcon>
          <svg width="26" height="24" viewBox="0 0 26 24">
            <rect x="1" y="3" width="21" height="14" fill="none" stroke="#fff" strokeWidth="1.500" />
            <rect x="3" y="5" width="14" height="10" fill="#fff" />
            <circle cx="18" cy="16" r="7" fill="#0b7a1f" />
            <path d="M18 12c2 2 2 5 0 8-2-3-2-6 0-8z" fill="none" stroke="#fff" />
          </svg>
        </TrayIcon>
        <TrayIcon>
          <svg width="20" height="28" viewBox="0 0 20 28" fill="none" stroke="#fff" strokeWidth="1.300">
            <path d="M3 5c3-3 9-3 12 0M3 23c3 3 9 3 12 0" />
            <rect x="1" y="8" width="12" height="12" rx="2" />
            <path d="M13 12l6-3v10l-6-3" />
          </svg>
        </TrayIcon>
        <TrayIcon>
          <svg width="22" height="22" viewBox="0 0 22 22" fill="none" stroke="#fff" strokeWidth="1.200">
            <path d="M1 21C1 10 10 1 21 1M6 21c0-8 7-15 15-15M11 21c0-5 5-10 10-10" />
            <circle cx="17" cy="19" r="1.200" fill="#fff" />
          </svg>
        </TrayIcon>
        <TrayIcon>
          <svg width="24" height="22" viewBox="0 0 24 22" fill="none" stroke="#fff" strokeWidth="1.300">
            <path d="M1 7h4l6-5v18l-6-5H1z" />
            <path d="M14 8c1.500 2 1.500 4 0 6M17 5c3 4 3 8 0 12M20 3c4 5 4 11 0 16" />
          </svg>
        </TrayIcon>
        <Clock>
          <span>9:13 PM</span>
          <span>10/31/2022</span>
        </Clock>
        <NotifyButton>
          <svg width="24" height="24" viewBox="0 0 24 24" fill="none" stroke="#fff" strokeWidth="1.400">
            <path d="M1 2h22v17h-7l-4 4-4-4H1z" />
          </svg>
        </NotifyButton>
      </Taskbar>
    </Screen>
  );
}
